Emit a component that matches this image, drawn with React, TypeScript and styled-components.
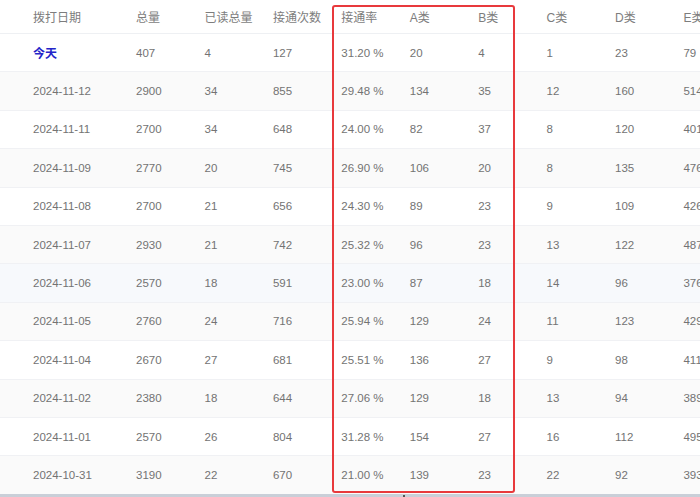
import React from "react";
import styled, { createGlobalStyle } from "styled-components";

const GlobalStyle = createGlobalStyle`
  html, body {
    margin: 0;
    padding: 0;
    background: #fff;
    overflow: hidden;
  }
  body {
    font-family: "Liberation Sans", "Noto Sans CJK SC", sans-serif;
  }
`;

const Page = styled.div`
  position: relative;
  width: 700px;
  height: 497px;
  overflow: hidden;
`;

const Table = styled.table`
  table-layout: fixed;
  border-collapse: collapse;
  width: 742px;
  font-size: 12px;
`;

const HeadCell = styled.th<{ $first?: boolean }>`
  height: 33px;
  padding: 0 0 0 ${(p) => (p.$first ? "33px" : "10px")};
  text-align: left;
  font-weight: 400;
  color: #7d7d7d;
  border-bottom: 1px solid #eef0f3;
  white-space: nowrap;
`;

const Row = styled.tr<{ $striped?: boolean; $hover?: boolean }>`
  height: 38.4px;
  background: ${(p) => (p.$hover ? "#f7f9fc" : p.$striped ? "#fafafa" : "#fff")};
  border-bottom: 1px solid #f0f1f4;
`;

const Cell = styled.td<{ $first?: boolean }>`
  padding: 0 0 0 ${(p) => (p.$first ? "33px" : "10px")};
  font-size: 11.5px;
  color: #737373;
  white-space: nowrap;
`;

const TodayLink = styled.span`
  font-size: 12px;
  color: #2424c8;
  font-weight: 700;
`;

const Highlight = styled.div`
  position: absolute;
  left: 332px;
  top: 5px;
  width: 183px;
  height: 488px;
  box-sizing: border-box;
  border: 2px solid #e8393c;
  border-radius: 3px;
  pointer-events: none;
`;

const Scrollbar = styled.div`
  position: absolute;
  left: 0;
  right: 0;
  bottom: 0;
  height: 3px;
  background: #c9cfd8;

  &::after {
    content: "";
    position: absolute;
    left: 403px;
    top: 1px;
    width: 2px;
    height: 2px;
    background: #555;
  }
`;

const headers = ["拨打日期", "总量", "已读总量", "接通次数", "接通率", "A类", "B类", "C类", "D类", "E类"];

const rows: string[][] = [
  ["今天", "407", "4", "127", "31.20 %", "20", "4", "1", "23", "79"],
  ["2024-11-12", "2900", "34", "855", "29.48 %", "134", "35", "12", "160", "514"],
  ["2024-11-11", "2700", "34", "648", "24.00 %", "82", "37", "8", "120", "401"],
  ["2024-11-09", "2770", "20", "745", "26.90 %", "106", "20", "8", "135", "476"],
  ["2024-11-08", "2700", "21", "656", "24.30 %", "89", "23", "9", "109", "426"],
  ["2024-11-07", "2930", "21", "742", "25.32 %", "96", "23", "13", "122", "487"],
  ["2024-11-06", "2570", "18", "591", "23.00 %", "87", "18", "14", "96", "376"],
  ["2024-11-05", "2760", "24", "716", "25.94 %", "129", "24", "11", "123", "429"],
  ["2024-11-04", "2670", "27", "681", "25.51 %", "136", "27", "9", "98", "411"],
  ["2024-11-02", "2380", "18", "644", "27.06 %", "129", "18", "13", "94", "389"],
  ["2024-11-01", "2570", "26", "804", "31.28 %", "154", "27", "16", "112", "495"],
  ["2024-10-31", "3190", "22", "670", "21.00 %", "139", "23", "22", "92", "393"],
];

export default function App() {
  return (
    <Page>
      <GlobalStyle />
      <Table>
        <colgroup>
          <col style={{ width: 126 }} />
          {headers.slice(1).map((h) => (
            <col key={h} style={{ width: 68.4 }} />
          ))}
        </colgroup>
        <thead>
          <tr>
            {headers.map((h, i) => (
              <HeadCell key={h} $first={i === 0}>
                {h}
              </HeadCell>
            ))}
          </tr>
        </thead>
        <tbody>
          {rows.map((r, ri) => (
            <Row key={r[0]} $striped={ri % 2 === 1} $hover={ri === 6}>
              {r.map((v, ci) => (
                <Cell key={ci} $first={ci === 0}>
                  {ri === 0 && ci === 0 ? <TodayLink>{v}</TodayLink> : v}
                </Cell>
              ))}
            </Row>
          ))}
        </tbody>
      </Table>
      <Highlight />
      <Scrollbar />
    </Page>
  );
}
